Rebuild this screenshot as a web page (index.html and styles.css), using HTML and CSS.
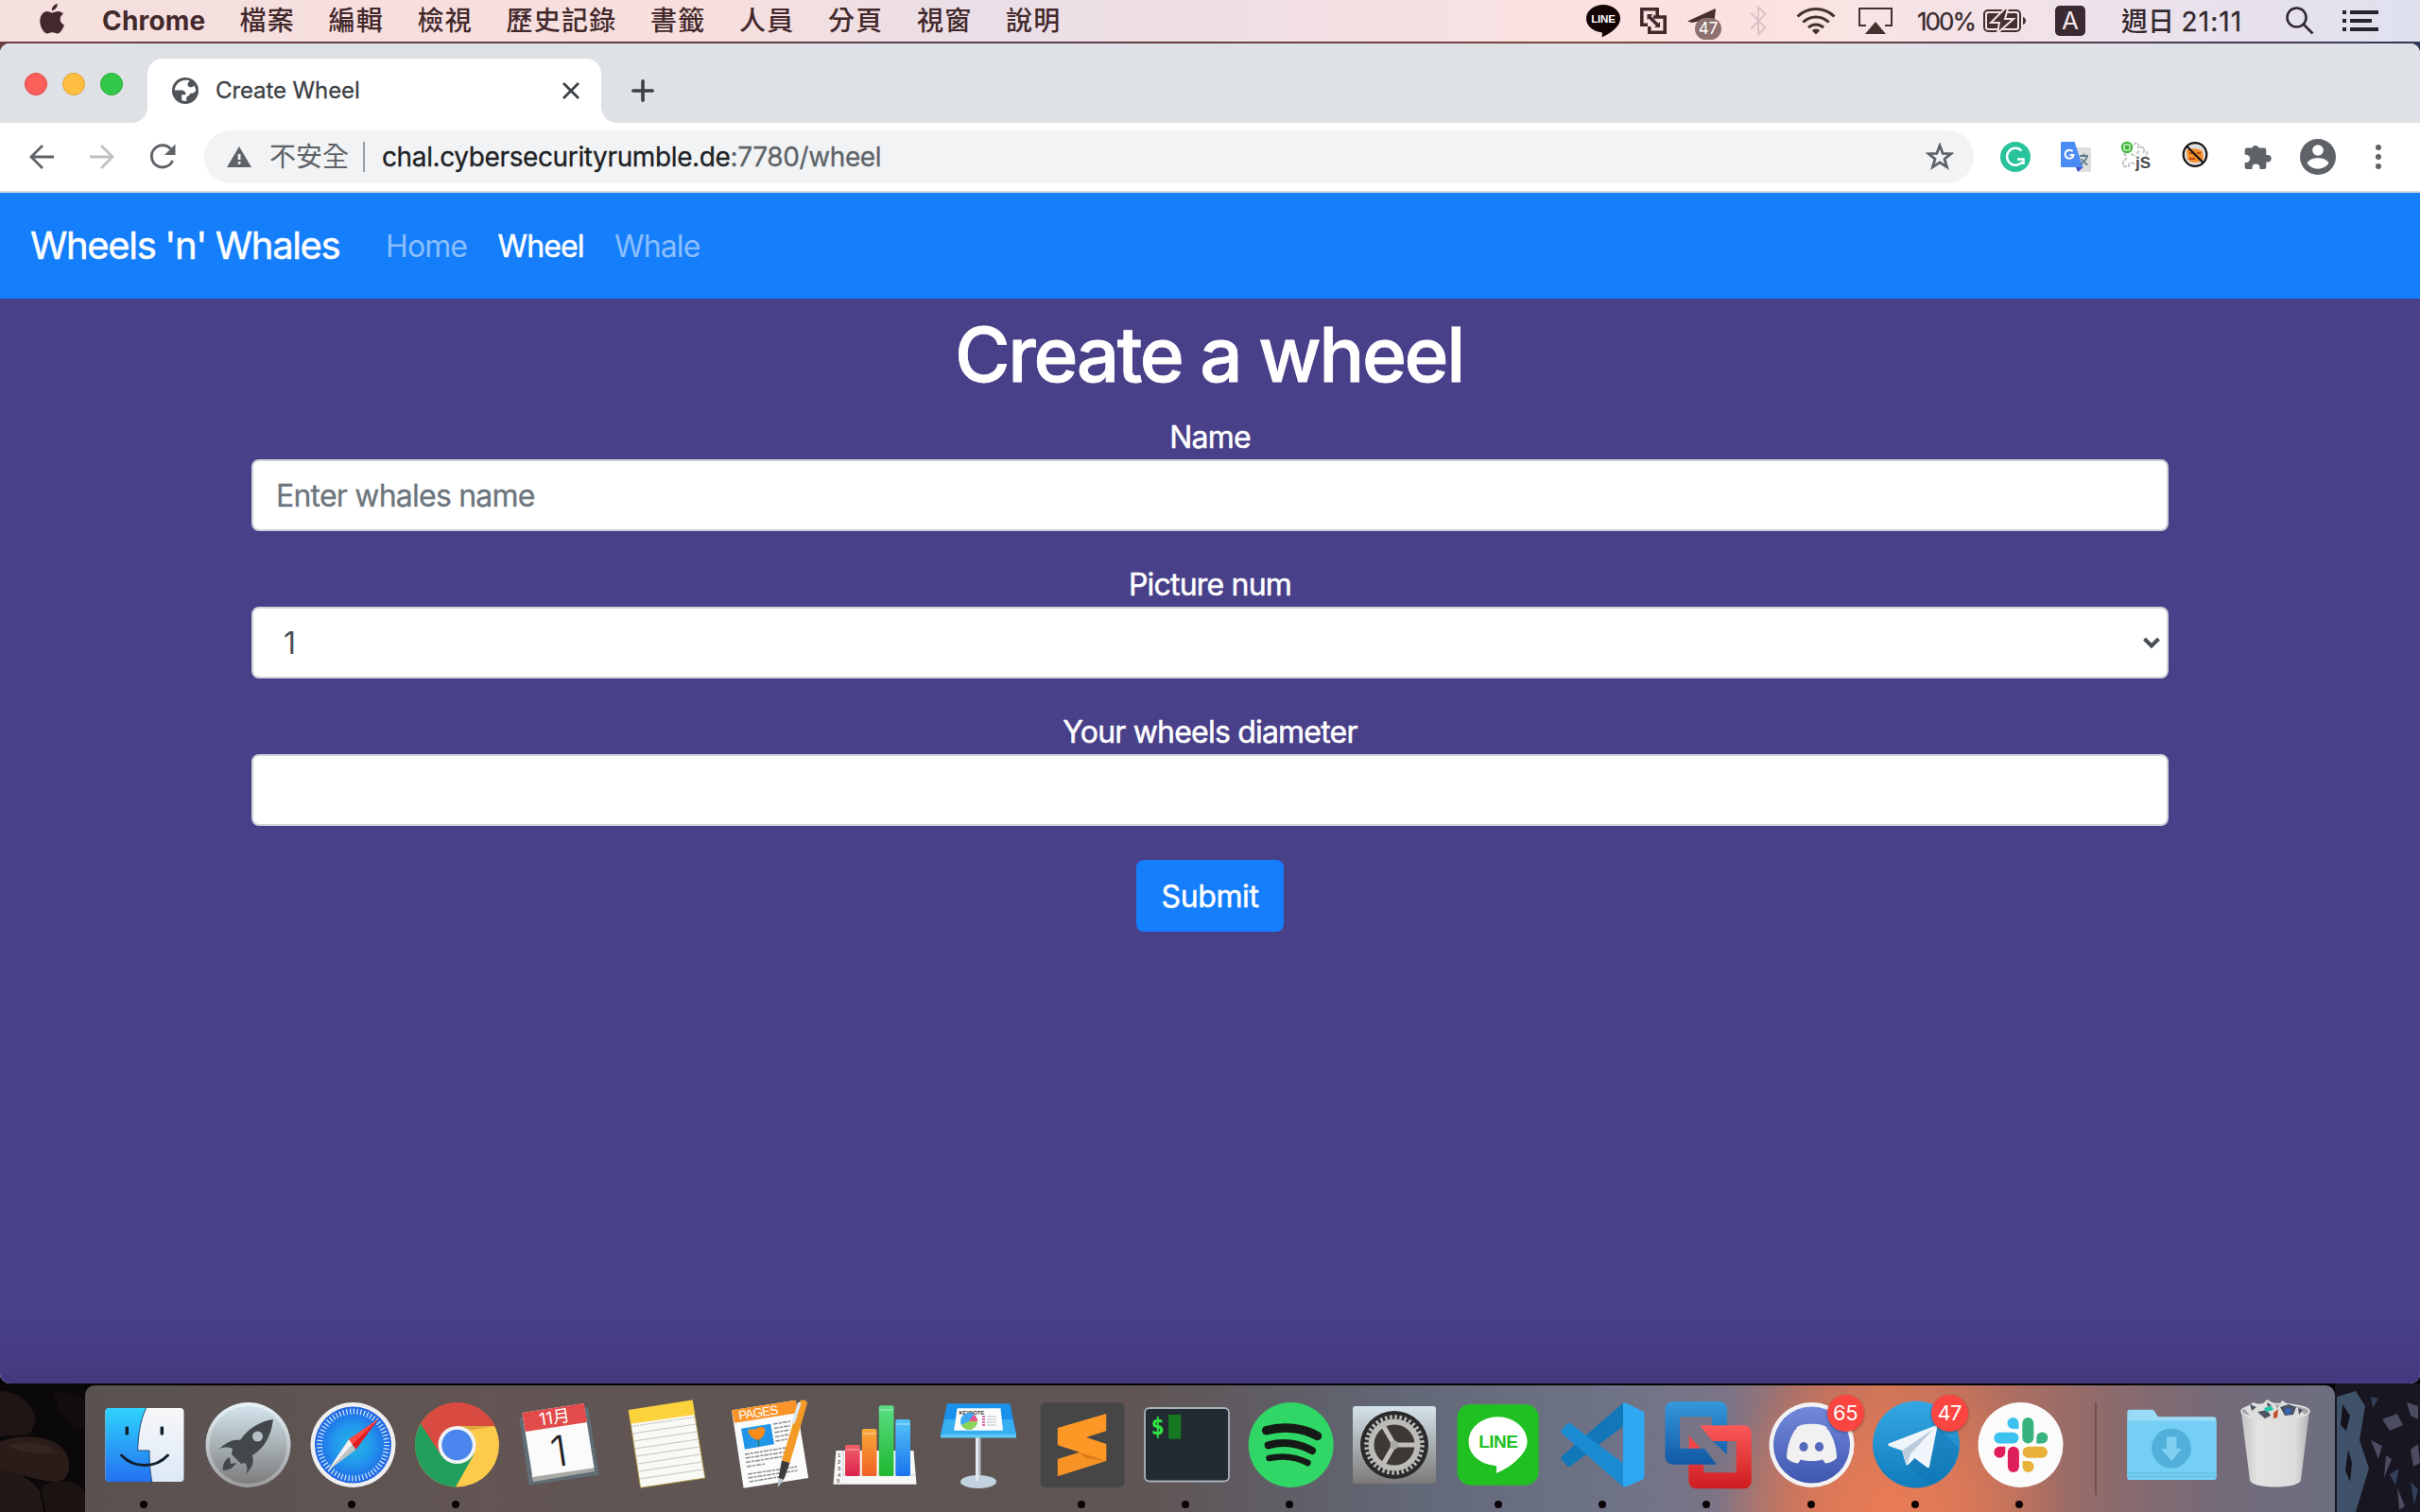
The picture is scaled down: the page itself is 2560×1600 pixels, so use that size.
FILE: index.html
```html
<!DOCTYPE html>
<html lang="zh-Hant">
<head>
<meta charset="utf-8">
<title>Create Wheel</title>
<link rel="stylesheet" href="styles.css">
</head>
<body>
<div class="desktop">
  <header class="menubar">
    <svg class="apple" width="26" height="32" viewBox="0 0 26 32"><path d="M13 9.500c2 0 3.500-1.500 6.500-1.500 2.200 0 4.200 1 5.500 2.800-5 3-4.200 9.500.9 11.600C24.400 26.800 21.700 31.500 18.500 31.500c-2 0-2.800-1.200-5.200-1.200s-3.300 1.200-5.200 1.200C4.300 31.500.3 24.500.3 18.300.3 12 4.100 8.100 8 8.100c2.200 0 3.700 1.400 5 1.400zM12.800 7.200C12.600 3.700 15.500.5 18.800.1c.3 3.600-2.600 7-6 7.100z"/></svg>
    <nav class="menus">
      <span class="app">Chrome</span>
      <span>檔案</span><span>編輯</span><span>檢視</span><span>歷史記錄</span><span>書籤</span><span>人員</span><span>分頁</span><span>視窗</span><span>說明</span>
    </nav>
    <div class="status">
      <svg class="s-line" width="36" height="36" viewBox="0 0 36 36"><path fill="#140406" d="M18 0c10 0 18 6.500 18 14.500C36 24 24 31 16.500 34.500c.5-2.500.5-4 0-5.300C7 28.500 0 22.500 0 14.500 0 6.500 8 0 18 0z"/><text x="18" y="19" class="t-line">LINE</text></svg>
      <svg class="s-vm" width="28" height="28" viewBox="0 0 28 28" fill="none" stroke="#43292b" stroke-width="3.600"><path d="M8 18.200H1.800V1.800h16.400V9M14 10h12.200v16.200H9.800V20M9 9l10 10"/><path d="M7.500 7h6l-6 6zM21 21h-6l6-6z" fill="#43292b" stroke="none"/></svg>
      <div class="s-tg"><svg width="32" height="18" viewBox="0 0 32 18"><path fill="#46302f" d="M0 13.500 28.500.5c1-.4 1.500 0 1.400 1L28 17H12l2-4-9 2z"/></svg><span class="count">47</span></div>
      <svg class="s-bt" width="18" height="32" viewBox="0 0 18 32" fill="none" stroke="#dcc4c6" stroke-width="2"><path d="M1 7.500 16.500 23 9 30.500v-29L16.500 9 1 24.500"/></svg>
      <svg class="s-wifi" width="42" height="30" viewBox="0 0 42 30" fill="none" stroke="#43302f" stroke-width="3"><path d="M1.500 10.500a27.500 27.500 0 0 1 39 0M7.300 16.500a19.500 19.500 0 0 1 27.400 0M13 22.200a11.500 11.500 0 0 1 16 0"/><path d="M21 29.500l-4.200-4.300a6 6 0 0 1 8.400 0z" fill="#43302f" stroke="none"/></svg>
      <svg class="s-air" width="36" height="28" viewBox="0 0 36 28"><path d="M8 19H1V1h34v18h-7" fill="none" stroke="#43302f" stroke-width="2"/><path d="M18 15l11 13H7z" fill="#43302f"/></svg>
      <span class="pct">100%</span>
      <svg class="s-bat" width="46" height="24" viewBox="0 0 46 24"><rect x="1" y="1" width="38" height="22" rx="4" fill="none" stroke="#43302f" stroke-width="2"/><rect x="4" y="4" width="32" height="16" rx="1.500" fill="#43302f"/><path d="M42 8c4 1 4 7 0 8z" fill="#43302f"/><path d="M23-1 8 14h9l-2 11L32 10h-9l3-11z" fill="#43302f" stroke="#f4e2e4" stroke-width="2"/></svg>
      <span class="ime">A</span>
      <span class="clock">週日 <span class="time">21:11</span></span>
      <svg class="s-find" width="30" height="30" viewBox="0 0 30 30" fill="none" stroke="#2e2833" stroke-width="2.600"><circle cx="11.500" cy="11.500" r="10"/><path d="M18.500 18.500 28.500 28.500"/></svg>
      <svg class="s-list" width="38" height="22" viewBox="0 0 38 22" fill="#25232f"><path d="M0 0h4v4H0zM0 9h4v4H0zM0 18h4v4H0zM8 0h30v4H8zM8 9h23v4H8zM8 18h30v4H8z"/></svg>
    </div>
  </header>

  <main class="window">
    <div class="tabstrip">
      <div class="lights"><i class="red"></i><i class="amber"></i><i class="green"></i></div>
      <div class="tab">
        <svg width="28" height="28" viewBox="0 0 28 28"><circle cx="14" cy="14" r="14" fill="#4f5459"/><path d="M16.500 2.800C9 2 3.300 7 2.700 13.600H9c4 0 5.500 1.500 5.500 4.700h-4.300V24c1.500.8 3.500 1.200 5 1.100v-3c0-3.200 4-2.300 4-5.600 3 1 4.500-.5 6-2.500-.2-2-.8-4-1.800-5.400-1.500 2.500-7 2.600-7-1.600 0-2 2-1.800 2-3.500z" fill="#fff"/></svg>
        <span class="title">Create Wheel</span>
        <svg width="18" height="18" viewBox="0 0 18 18" stroke="#3c4043" stroke-width="2.800"><path d="M1 1 17 17M17 1 1 17"/></svg>
      </div>
      <svg class="plus" width="24" height="24" viewBox="0 0 24 24" stroke="#3c4043" stroke-width="3.600" stroke-linecap="round"><path d="M12 1.800v20.400M1.800 12h20.400"/></svg>
    </div>
    <div class="toolbar">
      <svg class="nav-back" width="28" height="28" viewBox="0 0 28 28" fill="none" stroke="#5f6368" stroke-width="2.800"><path d="M27 14H3M15 2 3 14 15 26"/></svg>
      <svg class="nav-fwd" width="28" height="28" viewBox="0 0 28 28" fill="none" stroke="#bfc1c3" stroke-width="2.800"><path d="M1 14h24M13 2 25 14 13 26"/></svg>
      <svg class="nav-reload" width="28" height="28" viewBox="0 0 28 28"><path d="M22.600 5.600A11.600 11.600 0 1 0 24.600 18" fill="none" stroke="#5f6368" stroke-width="2.900"/><path d="M27.500.5v11.500H16z" fill="#5f6368"/></svg>
      <div class="omnibox">
        <svg width="26" height="22" viewBox="0 0 26 22"><path d="M13 0l13 22H0z" fill="#5f6368"/><path d="M11.700 8h2.800v6h-2.800zM11.700 16h2.800v2.800h-2.800z" fill="#f1f3f4"/></svg>
        <span class="insecure">不安全</span>
        <span class="url"><b>chal.cybersecurityrumble.de</b>:7780/wheel</span>
        <svg class="star" width="30" height="30" viewBox="0 0 30 30"><path d="M15 3l3.200 8.400 8.800.3-7 5.500 2.500 8.600L15 20.900l-7.500 4.900L10 17.200l-7-5.500 8.800-.3z" fill="none" stroke="#5f6368" stroke-width="2.800"/></svg>
      </div>
      <div class="exts">
        <svg width="32" height="32" viewBox="0 0 32 32"><circle cx="16" cy="16" r="16" fill="#28c39b"/><path d="M22.500 9.500A9 9 0 1 0 23 21.500M24.500 24v-5.500H18" fill="none" stroke="#fff" stroke-width="2.500"/></svg>
        <svg width="32" height="32" viewBox="0 0 32 32"><path d="M12 6h18.500a1.500 1.500 0 0 1 1.500 1.500V32H19z" fill="#dedede"/><path d="M1.500 0H14.500L23.500 27H1.500A1.500 1.500 0 0 1 0 25.500V1.500A1.500 1.500 0 0 1 1.500 0z" fill="#4b8bf4"/><path d="M16 27h7.500L18 32z" fill="#3a53c5"/><path d="M20 15h9M24.500 12.500V15M28 15c-1 4-4 7-7.500 9M22 18c1 3 4 5 6.500 6.500" fill="none" stroke="#5f7d8c" stroke-width="1.800"/><path d="M12.500 10.300A4.500 4.500 0 1 0 13.500 14H9.500" fill="none" stroke="#fff" stroke-width="2.100"/></svg>
        <svg class="ext-js" width="32" height="32" viewBox="0 0 32 32"><path d="M13 3c3-3 7-1 5 3h6v5c4-2 5 4 1 4M2 13c4 0 5 6 0 7v6h6c-1-5 6-5 5-1M10 13c3 0 3 3 6 2M19 10c-3 1-2 4 0 5" fill="none" stroke="#c4c4c4" stroke-width="2" stroke-dasharray="4 1.500"/><circle cx="6" cy="6" r="6.200" fill="#3fb33a"/><rect x="3" y="3" width="6" height="6" rx="1" fill="none" stroke="#c9f2c5" stroke-width="1.600"/><text x="15" y="27.500" class="t-js">jS</text></svg>
        <svg width="28" height="32" viewBox="0 0 28 32"><circle cx="14" cy="13.500" r="12.300" fill="#dfdfdf"/><path d="M5 9c5-3 13-2 17 1l1 8c-4 5-12 5-17 1z" fill="#f58f2c"/><path d="M8 12h4M16 12h4M8 18h6" stroke="#b84e12" stroke-width="2"/><circle cx="14" cy="13.500" r="12.300" fill="none" stroke="#15110f" stroke-width="2.200"/><path d="M5.500 5 22.500 22" stroke="#15110f" stroke-width="2.200"/></svg>
        <svg width="30" height="30" viewBox="0 0 30 30"><path fill="#5f6368" d="M8.500 5.500V5a4 4 0 0 1 7 0v.5H21a2.300 2.300 0 0 1 2.300 2.300V13H25a3.700 3.700 0 0 1 0 7.400h-1.700v5.300A2.300 2.300 0 0 1 21 28h-4.500v-1.500a4 4 0 0 0-8 0V28H3a2.300 2.300 0 0 1-2.300-2.300V21H2a4 4 0 0 0 0-8.300H.7V7.800A2.300 2.300 0 0 1 3 5.500z"/></svg>
        <svg width="38" height="38" viewBox="0 0 38 38"><circle cx="19" cy="19" r="19" fill="#5f6368"/><circle cx="19" cy="12" r="5.800" fill="#fff"/><path d="M7.500 25.800c3-7.300 20-7.300 23 0-5.500 7.800-17.500 7.800-23 0z" fill="#fff"/></svg>
        <svg width="6" height="26" viewBox="0 0 6 26" fill="#5f6368"><circle cx="3" cy="3" r="3"/><circle cx="3" cy="13" r="3"/><circle cx="3" cy="23" r="3"/></svg>
      </div>
    </div>

    <nav class="navbar">
      <a class="brand">Wheels 'n' Whales</a>
      <a class="link">Home</a><a class="link active">Wheel</a><a class="link">Whale</a>
    </nav>
    <section class="page">
      <form class="form">
        <h1>Create a wheel</h1>
        <label>Name</label>
        <div class="control"><span class="placeholder">Enter whales name</span></div>
        <label>Picture num</label>
        <div class="control select"><span>1</span><svg width="18" height="12" viewBox="0 0 18 12"><path d="M1.500 2 9 9.500 16.500 2" fill="none" stroke="#495057" stroke-width="4"/></svg></div>
        <label>Your wheels diameter</label>
        <div class="control"></div>
        <button class="submit" type="button">Submit</button>
      </form>
    </section>
  </main>

  <footer class="bottom">
    <svg class="rocks" width="90" height="136" viewBox="0 0 90 136"><rect width="90" height="136" fill="#0b0809"/><path d="M0 8c18 0 34 12 38 30l-6 16-32 2z" fill="#1d1413"/><path d="M0 62c20-10 60-8 70 12 8 18 0 32-14 30-20-2-40-10-56-12z" fill="#2a1c19"/><path d="M8 66c20-6 44-4 54 8-10-2-30 4-54-8z" fill="#35241f"/><path d="M0 92c14-2 34 10 42 22l4 22H0z" fill="#241816"/><path d="M44 110c8-8 30-12 46 4v22H48z" fill="#1b1312"/><path d="M56 10c10-6 20 4 34 6v30c-14 4-26-10-34-36z" fill="#120d0e"/></svg>
    <div class="dock">
      <!-- Finder -->
      <div class="cell on"><svg viewBox="0 0 110 134"><defs><linearGradient id="fa" x2="0" y2="1"><stop stop-color="#2fd3fd"/><stop offset="1" stop-color="#2370f0"/></linearGradient><linearGradient id="fb" x2="0" y2="1"><stop stop-color="#f7f7f8"/><stop offset="1" stop-color="#dce9f7"/></linearGradient></defs><rect x="14.500" y="24" width="83" height="78" rx="4" fill="url(#fb)"/><path d="M18.500 24h39C51 38 49 54 48.700 69H61c0 12 1 24 2.800 33H18.500a4 4 0 0 1-4-4V28a4 4 0 0 1 4-4z" fill="url(#fa)"/><path d="M57.500 24C51 38 49 54 48.700 69H61c0 12 1 24 2.800 33" fill="none" stroke="#1a4a80" stroke-width="1"/><path d="M37.300 45v6M74.300 45v6" stroke="#10202e" stroke-width="3.600" stroke-linecap="round"/><path d="M31.500 74c13 14 36 14 49 0" fill="none" stroke="#10202e" stroke-width="3" stroke-linecap="round"/></svg></div>
      <!-- Launchpad -->
      <div class="cell"><svg viewBox="0 0 110 134"><defs><linearGradient id="la" x2="0" y2="1"><stop stop-color="#d3e4ec"/><stop offset="1" stop-color="#7d7d7d"/></linearGradient><linearGradient id="lb" x2="0" y2="1"><stop stop-color="#e9f5fb"/><stop offset="1" stop-color="#9a9a9a"/></linearGradient></defs><circle cx="55.500" cy="63" r="45" fill="url(#lb)"/><circle cx="55.500" cy="63" r="41" fill="url(#la)"/><path d="M82 36C68 38 55 46 47 58c-8-1-14 2-22 9 6-2 10-2 14 0l-1 6 10 10 4-1c3 3 3 7 1 12 7-7 9-12 7-20 13-8 20-21 22-38z" fill="#41474a"/><path d="M36 76c-5 2-8 8-7 14 6 0 11-3 14-8l-6 1z" fill="#41474a"/><circle cx="65.500" cy="54" r="5.500" fill="#b5bfc3"/></svg></div>
      <!-- Safari -->
      <div class="cell on"><svg viewBox="0 0 110 134"><defs><radialGradient id="sa"><stop stop-color="#22b8e0"/><stop offset=".5" stop-color="#2298ee"/><stop offset="1" stop-color="#1f63e4"/></radialGradient></defs><circle cx="55.500" cy="63" r="45" fill="#efefef"/><circle cx="55.500" cy="63" r="40.500" fill="url(#sa)"/><circle cx="55.500" cy="63" r="35.500" fill="none" stroke="#d8ecfb" stroke-width="6" stroke-dasharray="1.200 2.518"/><path d="M82.500 35.500 50.900 57.300 58.400 68z" fill="#e31d24"/><path d="M82.500 35.500 50.900 57.300 54.600 62.600z" fill="#ff4b46"/><path d="M28.500 90.700 50.900 57.300 58.400 68z" fill="#bfc3c6"/><path d="M28.500 90.700 50.900 57.300 54.600 62.600z" fill="#f2f2f2"/></svg></div>
      <!-- Chrome -->
      <div class="cell on"><svg viewBox="0 0 110 134"><circle cx="55.500" cy="63" r="44.500" fill="#fdca4b"/><path d="M55.500 63 73.500 73 54 107.500A44.500 44.500 0 0 1 17 40.700z" fill="#229f5c"/><path d="M17 40.700A44.500 44.500 0 0 1 95.800 43H55.500L38 73z" fill="#d94b40"/><path d="M55.500 43H95l-34 6z" fill="#b8862a" opacity=".45"/><circle cx="55.500" cy="63" r="20" fill="#f3f3f3"/><circle cx="55.500" cy="63" r="16.300" fill="#4a86ee"/></svg></div>
      <!-- Calendar -->
      <div class="cell"><svg viewBox="0 0 110 134"><path d="M11.400 34 84.200 23.300 95.600 94.700 21.500 105.700z" fill="#5f6d75"/><path d="M24 95 90 86l1 5-65 11z" fill="#a9a9a4"/><path d="M14.400 29 79.600 19 90.500 87.300 25.300 97z" fill="#fbfbfb"/><path d="M14.400 29 79.600 19 83 39 17.700 49z" fill="#e24b4a"/><text transform="translate(49.500 40) rotate(-8.500)" class="cal-m">11月</text><text transform="translate(55.500 85.500) rotate(-8.500)" class="cal-d">1</text></svg></div>
      <!-- Notes -->
      <div class="cell"><svg viewBox="0 0 110 134"><path d="M17 26.300 84.400 15.700 97.800 98 29.600 108.300z" fill="#f9f9f6" stroke="#b59a3a" stroke-width=".8"/><path d="M17 26.300 84.400 15.700 87 31 19.500 40.700z" fill="#fcd33c"/><path d="M20 43.500 87 33.500" stroke="#999" stroke-width="1" stroke-dasharray="1.500 1.500"/><path d="M21 51l67-10M22.300 59l67-10M23.600 67l67-10M24.900 75l67-10M26.200 83l67-10M27.500 91l67-10M28.800 99l67-10" stroke="#c4c4c8" stroke-width="1"/></svg></div>
      <!-- Pages -->
      <div class="cell"><svg viewBox="0 0 110 134"><path d="M15 26.300 82.700 15.700 96.200 98 27.600 108.700z" fill="#fbfbfb"/><path d="M15 26.300 82.700 15.700 85.700 29 17.900 39.700z" fill="#fa9429"/><text transform="translate(23 36.500) rotate(-8.500)" class="pages">PAGES</text><path d="M25 45.700 56.200 40.700 60 62.300 28.900 67.700z" fill="#2196e8"/><path d="M32 48c4-4 6 0 9-2 4-3 8-2 9 0 1 6-3 10-7 12-5-1-10-5-11-10z" fill="#f98b1a"/><path d="M43 57l1 8" stroke="#2a6b2a" stroke-width="1"/><path d="M59 41l18-3M60 45.500l17-3M60.500 50l16-3M61 54.500l14-2.500M61.500 59l12-2M29 73l43-7M29.500 77l42-6.500M30 81.500l41-6.500M31 86l20-3M32 94l52-8M32.500 98l52-8M33.500 102l40-6.500" stroke="#8d8d8d" stroke-width="1.500" stroke-dasharray="5 1 3 1"/><path d="M87 17c2-3 8-1 8 2L76.500 82 68 79.500z" fill="#f39a26"/><path d="M87 18 80 40" stroke="#dbe8f5" stroke-width="3.500"/><path d="M68 79.500 76.500 82 70 100 64.500 98z" fill="#3c3c3e"/><path d="M70 100 64.500 98 63.800 108z" fill="#b9c4cc"/></svg></div>
      <!-- Numbers -->
      <div class="cell"><svg viewBox="0 0 110 134"><defs><linearGradient id="n1" x2="0" y2="1"><stop stop-color="#f2606a"/><stop offset="1" stop-color="#d9234a"/></linearGradient><linearGradient id="n2" x2="0" y2="1"><stop stop-color="#f9ab3a"/><stop offset="1" stop-color="#ef5f24"/></linearGradient><linearGradient id="n3" x2="0" y2="1"><stop stop-color="#5ade84"/><stop offset="1" stop-color="#1fb82f"/></linearGradient><linearGradient id="n4" x2="0" y2="1"><stop stop-color="#55c3f8"/><stop offset="1" stop-color="#1a74ee"/></linearGradient></defs><path d="M15.400 69h82.100l3 35.700h-88z" fill="#f7f7f7"/><path d="M23 69v26h76" fill="none" stroke="#c8c8c8" stroke-width="1"/><g class="axis"><text x="17" y="76">1</text><text x="17" y="83">2</text><text x="17" y="90">3</text><text x="17" y="97">4</text><text x="16" y="103">5</text></g><rect x="25" y="63" width="15.700" height="33" rx="2" fill="url(#n1)"/><rect x="42.800" y="46" width="15.700" height="50" rx="2" fill="url(#n2)"/><rect x="60.800" y="21.300" width="15.700" height="74.700" rx="2" fill="url(#n3)"/><rect x="78.300" y="36" width="15.700" height="60" rx="2" fill="url(#n4)"/><path d="M25.500 68h15M43 51h15M61 26h15M78.500 41h15" stroke="#fff" stroke-opacity=".55" stroke-width="1.200"/></svg></div>
      <!-- Keynote -->
      <div class="cell"><svg viewBox="0 0 110 134"><rect x="53" y="55" width="5.500" height="46" fill="#b4bdc6"/><ellipse cx="56" cy="102" rx="19" ry="7" fill="#c3d2e0"/><path d="M53 55h3v46h-3z" fill="#e3e9ee"/><path d="M23 19.300h66.600L96 52H16z" fill="#1b91ee"/><path d="M16 52h80v3.500H16z" fill="#60c8f5"/><path d="M20 36h72l4 16H16z" fill="#39aef0"/><path d="M33.600 24.300h45.900L82 47.700H30.200z" fill="#fcfcfc"/><text x="35.500" y="30.500" class="keynote">KEYNOTE</text><circle cx="46" cy="38" r="9" fill="#3fa9f5"/><path d="M46 38l5-7a9 9 0 0 1 4 7z" fill="#f0508c"/><path d="M46 38h9a9 9 0 0 1-17 4z" fill="#8ed35a"/><path d="M60 33h3M60 36h3M60 39h3M60 42h3" stroke="#d06aa8" stroke-width="1.800"/><path d="M65 33h10M65 36h10M65 39h10M65 42h10" stroke="#cfd3d8" stroke-width="1.300"/></svg></div>
      <!-- Sublime Text -->
      <div class="cell on"><svg viewBox="0 0 110 134"><rect x="11.700" y="18.300" width="89" height="89.400" rx="5" fill="#464646"/><path d="M29.800 78 81.200 62V80L29.800 96.300z" fill="#f79324"/><path d="M29.800 45 81.200 30V48.300L60.200 55 81.200 62V80L29.800 63.300z" fill="#fd9827"/><path d="M51.700 70.500 81.200 80l-21-3z" fill="#d77a16"/></svg></div>
      <!-- Terminal -->
      <div class="cell on"><svg viewBox="0 0 110 134"><rect x="11" y="24" width="89" height="77.500" rx="5" fill="#222b31" stroke="#a9b3b9" stroke-width="1.800"/><rect x="36.200" y="31" width="13" height="25.700" fill="#177a22"/><text x="17.500" y="52" class="prompt">$</text></svg></div>
      <!-- Spotify -->
      <div class="cell on"><svg viewBox="0 0 110 134"><circle cx="55.700" cy="63" r="45" fill="#30d666"/><g fill="none" stroke="#161a16" stroke-linecap="round"><path d="M29.600 47.700C48 42.500 69 45 83.500 53.500" stroke-width="9.500"/><path d="M31.700 63.300C47 59 64 61 78 69" stroke-width="8"/><path d="M32.500 77C46 74 61 75.500 73.400 82" stroke-width="6.500"/></g></svg></div>
      <!-- System preferences -->
      <div class="cell"><svg viewBox="0 0 110 134"><defs><linearGradient id="pa" x2="0" y2="1"><stop stop-color="#d5e3ea"/><stop offset="1" stop-color="#7c7a79"/></linearGradient></defs><rect x="11" y="22" width="88" height="82" rx="3" fill="url(#pa)"/><circle cx="55" cy="63" r="36" fill="#2a2a2b"/><circle cx="55" cy="63" r="29.500" fill="none" stroke="#bdbbb8" stroke-width="4.500" stroke-dasharray="2.600 2.550"/><circle cx="55" cy="63" r="24.500" fill="#3b3836" stroke="#bdbbb8" stroke-width="6"/><path d="M55 63h22M55 63 44 44M55 63 44 82" stroke="#c2c0bd" stroke-width="5"/><circle cx="55" cy="63" r="4.500" fill="#a9a7a5"/></svg></div>
      <!-- LINE -->
      <div class="cell on"><svg viewBox="0 0 110 134"><rect x="11.600" y="20" width="86" height="85.700" rx="14" fill="#20c022"/><path d="M54.600 33.300C71 33.300 85.600 45 85.600 59.500 85.600 74 64 89 52.500 93c1-3.500 1-6 0-8C35 83.500 23.600 73 23.600 59.500c0-14.500 14-26.200 31-26.200z" fill="#fff"/><text x="54.800" y="66" class="line-app">LINE</text></svg></div>
      <!-- VS Code -->
      <div class="cell on"><svg viewBox="0 0 110 134"><path d="M76 18.700V43.300L20.500 85.500q-2 1.500-4-.8L11 78.500q-1.500-2 .5-4z" fill="#1177b8"/><path d="M76 107.300V82.300L20.500 40.500q-2-1.500-4 .5l-5.500 6q-1.500 2 .5 4z" fill="#1a8ad2"/><path d="M76 18.700q3-.5 5 .8l16 8q1.500 1 1.500 3v66q0 2-1.500 3l-16 7q-2 1-5 .800z" fill="#2fa8f2"/></svg></div>
      <!-- VMware -->
      <div class="cell on"><svg viewBox="0 0 110 134"><defs><linearGradient id="va" gradientUnits="userSpaceOnUse" x1="0" x2="0" y1="17" y2="84"><stop stop-color="#3498dc"/><stop offset="1" stop-color="#1258a4"/></linearGradient><linearGradient id="vb" gradientUnits="userSpaceOnUse" x1="0" x2="0" y1="42" y2="109"><stop stop-color="#fb5a5a"/><stop offset="1" stop-color="#cf1c20"/></linearGradient></defs><path d="M43.300 109.300a8 8 0 0 1-8-8V83h16v9.300h34.500V59H60.600L47 42.300h46.800a8 8 0 0 1 8 8v51a8 8 0 0 1-8 8z" fill="url(#vb)"/><path d="M18.500 17H68a8 8 0 0 1 8 8v17.300H60V33.300H26v33.400h26L65 83.700H18.500a8 8 0 0 1-8-8V25a8 8 0 0 1 8-8zM60.600 59H76v14z" fill="url(#va)"/><path d="M35.700 53 48 66.700H35.700z" fill="#f0454a"/></svg></div>
      <!-- Discord -->
      <div class="cell on"><svg viewBox="0 0 110 134"><defs><linearGradient id="da" x2="0" y2="1"><stop stop-color="#7289da"/><stop offset="1" stop-color="#3f57b0"/></linearGradient></defs><circle cx="55.500" cy="63" r="45" fill="#f2f2f4"/><circle cx="55.500" cy="63" r="40.500" fill="url(#da)"/><path d="M38 47c6-4 12-5 17.500-5S67 43 73 47c6 9 9 20 9 30-4 4-8 5-12 5.500l-3-4c-7 2-16 2-23 0l-3 4c-4-.5-8-1.500-12-5.500 0-10 3-21 9-30z" fill="#f1f1f2"/><path d="M40 46c5-5 26-5 31 0" fill="none" stroke="#f1f1f2" stroke-width="3"/><ellipse cx="47" cy="65" rx="4.600" ry="5" fill="#5369bd"/><ellipse cx="63.500" cy="65" rx="4.600" ry="5" fill="#5369bd"/></svg><span class="badge">65</span></div>
      <!-- Telegram -->
      <div class="cell on"><svg viewBox="0 0 110 134"><defs><linearGradient id="ta" x2="0" y2="1"><stop stop-color="#35a7e4"/><stop offset="1" stop-color="#0f7cbb"/></linearGradient></defs><circle cx="56" cy="62.500" r="46" fill="url(#ta)"/><path d="M45 84 78.200 42.700 101 66c-2 18-15 34-31 38z" fill="#0d6ea8" opacity=".35"/><path d="M27 61.500 76 42.700q2.500-.8 2.200 2L70 86q-.8 2-2.600.7L54.500 77 47 84.500q-1.500.5-2-1.500L41 69l-14-5q-1.500-1 0-2.500z" fill="#eff5fa"/><path d="M41 69 74 46.500 50 72.500 46 84z" fill="#b9cbdc"/></svg><span class="badge">47</span></div>
      <!-- Slack -->
      <div class="cell on"><svg viewBox="0 0 110 134"><circle cx="55.500" cy="63" r="45" fill="#fbfbfb"/><g fill="#3cc2ee"><rect x="27.300" y="49.700" width="26.200" height="11.800" rx="5.900"/><path d="M53.500 46V40a6 6 0 1 0-6 6z"/></g><g fill="#37b37e"><rect x="57.300" y="34" width="12" height="27.400" rx="6"/><path d="M72.300 61.500h6a6 6 0 1 0-6-6z"/></g><g fill="#df1f5c"><rect x="41.900" y="64.700" width="12" height="27.400" rx="6"/><path d="M39.300 64.700h-6a6 6 0 1 0 6 6z"/></g><g fill="#eab13a"><rect x="57.600" y="64.700" width="26.400" height="12" rx="6"/><path d="M57.600 80v6a6 6 0 1 0 6-6z"/></g></svg></div>
      <div class="rule"></div>
      <!-- Downloads -->
      <div class="cell"><svg viewBox="0 0 110 134"><path d="M11 25.700h23q2.500 0 3.500 2l2.500 4.500q.8 1 3 1h56q3.500 0 3.500 3V97q0 3-3 3H11.300q-3 0-3-3V28.700q0-3 2.700-3z" fill="#9adcf7"/><path d="M8.300 37.500h94.200V97q0 3-3 3H11.300q-3 0-3-3z" fill="#75cff5"/><path d="M8.300 93h94.200M8.300 96.500h94.200" stroke="#5fb8de" stroke-width="1"/><circle cx="55" cy="66.500" r="21" fill="#51b0da"/><path d="M50 54.500h10.500V67H66L55.200 80 44 67h6z" fill="#7fd0f2"/></svg></div>
      <!-- Trash -->
      <div class="cell"><svg viewBox="0 0 110 134"><defs><linearGradient id="tr"><stop stop-color="#c4c4c5"/><stop offset=".25" stop-color="#e4e4e4"/><stop offset=".8" stop-color="#dcdcdc"/><stop offset="1" stop-color="#b3b3b5"/></linearGradient></defs><path d="M18.700 27 28 100c1 10 53 10 54 0L91 27z" fill="url(#tr)"/><ellipse cx="55" cy="27.500" rx="36" ry="8" fill="#a5a5aa" stroke="#e8e8ea" stroke-width="1.500"/><path d="M22 24l10-6 8 3 6-6 8 4 3 6 5-9 10 6 8 2 6 7-8 5-14 3-20-1-14-3z" fill="#dedede"/><path d="M28 20l7 3-5 4zM36 28l8 7 6-3-4-6zM60 23l5 9 9-1 3-8-8-3zM79 24l5 2-4 5zM46 18l5 3-4 2z" fill="#4b5260"/><path d="M43 24l8-2 2 4-8 2z" fill="#21c5a8"/><path d="M66 24l6 1-2 6-5-2z" fill="#3565c0"/><path d="M53 29l5-4-1 9-4 1z" fill="#c4512e"/></svg></div>
    </div>
    <svg class="rocks" width="90" height="136" viewBox="0 0 90 136"><rect width="90" height="136" fill="#181620"/><path d="M2 14 22 8 32 24 26 60 36 90 22 136H2z" fill="#40526a"/><path d="M8 22 16 34 12 50 6 44zM14 70l4 14-2 20-5-12z" fill="#14121c"/><path d="M50 38l16-6 6 12-14 6zM76 20l12 4v14l-8-4zM80 70l8-6 2 20-7 4zM38 60l12 6-4 14zM66 110l8 20-6 4zM54 76l6 4-8 20z" fill="#4c4c60"/><path d="M38 14l8 2-6 10zM58 96l10-6-4 18zM80 104l8 8-4 16z" fill="#33405a"/></svg>
  </footer>
</div>
</body>
</html>
```
FILE: styles.css
```css
* { box-sizing: border-box; }
body { margin: 0; width: 2560px; height: 1600px; overflow: hidden; font-family: Inter, "Noto Sans CJK TC", sans-serif; }
svg { display: block; flex: none; }
.desktop { display: flex; flex-direction: column; height: 1600px; background: linear-gradient(90deg, #6e3f40, #583c48 40%, #7d4540 65%, #34365a) 0 0 / 100% 70px no-repeat #000; }

.menubar { display: flex; align-items: center; height: 44px; flex: none; padding-left: 42px; background: linear-gradient(90deg, #f5dfdf 0, #f7dfde 30%, #eadfe7 40%, #f0dfe4 52%, #fbe1e0 66%, #fae3e3 76%, #efe2ea 86%, #dfe1ef 100%); color: #43292b; font-size: 28px; }
.apple { fill: #43292b; margin-top: -4px; }
.menus { display: flex; margin-left: 40px; gap: 35.400px; line-height: 44px; font-weight: 500; letter-spacing: 1.300px; }
.menus .app { width: 110px; font-weight: 700; letter-spacing: .2px; }
.status { display: flex; align-items: center; margin-left: auto; height: 44px; color: #3a2a30; }
.t-line { font: 700 11.500px "Liberation Sans", sans-serif; fill: #fff; text-anchor: middle; letter-spacing: -.2px; }
.s-line { margin-top: 1px; }
.s-vm { margin-left: 21px; }
.s-tg { position: relative; width: 36px; height: 44px; margin-left: 22px; padding-top: 9px; }
.count { position: absolute; left: 8px; top: 19px; width: 28px; height: 23px; border-radius: 12px; background: #8c7170; color: #fff; font-size: 17px; line-height: 23px; text-align: center; }
.s-bt { margin-left: 30px; }
.s-wifi { margin-left: 31px; }
.s-air { margin-left: 24px; }
.pct { margin-left: 26px; width: 61px; font-size: 26px; letter-spacing: -2px; -webkit-text-stroke: .3px; }
.s-bat { margin-left: 9px; }
.ime { width: 32px; height: 32px; margin-left: 30px; border-radius: 5px; background: #3a2a31; color: #f3e4ea; line-height: 32px; text-align: center; font-size: 26px; }
.clock { width: 127px; margin-left: 38px; margin-top: -2px; white-space: nowrap; font-size: 28px; font-weight: 500; color: #33272e; }
.time { font-weight: 400; letter-spacing: 1.100px; -webkit-text-stroke: .3px; }
.s-find { margin-left: 47px; }
.s-list { margin: 0 44px 0 30px; }

.window { display: flex; flex-direction: column; height: 1418px; margin-top: 2px; flex: none; border-radius: 10px; overflow: hidden; background: #fff; }
.tabstrip { display: flex; height: 84px; flex: none; background: #dee1e6; }
.lights { display: flex; gap: 16px; width: 156px; padding: 31px 0 0 26px; background: #dee1e6; }
.lights i { width: 24px; height: 24px; border-radius: 50%; border-width: 1px; border-style: solid; }
.red { background: #fc605b; border-color: #e14640; }
.amber { background: #fdbe41; border-color: #e0a02f; }
.green { background: #34c84a; border-color: #24ab34; }
.tab { position: relative; display: flex; align-items: center; width: 480px; height: 68px; margin-top: 16px; padding: 0 23px 0 26px; border-radius: 16px 16px 0 0; background: #fff; }
.tab::before, .tab::after { content: ""; position: absolute; bottom: 0; width: 16px; height: 16px; }
.tab::before { left: -16px; background: radial-gradient(circle at 0 0, #dee1e6 15.500px, #fff 16px); }
.tab::after { right: -16px; background: radial-gradient(circle at 100% 0, #dee1e6 15.500px, #fff 16px); }
.title { flex: 1; margin-left: 18px; margin-top: -1px; font-size: 24px; letter-spacing: -.1px; color: #3c4043; -webkit-text-stroke: .3px; }
.plus { margin: 38px 0 0 32px; }
.toolbar { display: flex; align-items: center; height: 74px; flex: none; padding-left: 30px; border-bottom: 2px solid #d9dbdf; background: #fff; }
.nav-fwd { margin-left: 36px; }
.nav-reload { margin-left: 36px; }
.omnibox { display: flex; align-items: center; width: 1872px; height: 56px; margin-left: 30px; padding: 0 21px 0 24px; border-radius: 28px; background: #f1f3f4; font-size: 28px; color: #5f6368; }
.insecure { margin-left: 19px; width: 101px; height: 32px; line-height: 32px; border-right: 2px solid #9aa0a6; white-space: nowrap; }
.url { margin-left: 18px; flex: 1; letter-spacing: -.38px; -webkit-text-stroke: .3px; }
.url b { font-weight: 400; color: #202124; }
.exts { display: flex; align-items: center; margin-left: 28px; }
.exts svg { margin-right: 32px; }
.exts svg:nth-child(4) { margin-right: 38px; }
.exts svg:nth-child(5) { margin-right: 29px; }
.exts svg:nth-child(6) { margin-right: 42px; }
.exts svg:nth-child(7) { margin-right: 0; }
.ext-js { overflow: visible; }
.t-js { font: 700 17px "Liberation Sans", sans-serif; fill: #4a4a4a; }

.navbar { display: flex; align-items: center; height: 112px; flex: none; padding-left: 32px; background: #157efb; color: #fff; font-size: 32px; -webkit-text-stroke: .5px; }
.brand { font-size: 40px; width: 328px; margin: -1px 48px 0 0; white-space: nowrap; letter-spacing: -1.350px; }
.link { color: rgba(255,255,255,.5); margin-right: 32.500px; letter-spacing: -.9px; -webkit-text-stroke: 0; }
.link.active { color: #fff; -webkit-text-stroke: .5px; }
.page { flex: 1; padding: 11px 266px 0; background: linear-gradient(#484088 0, #484088 94%, #44397f 100%); color: #fff; font-size: 32px; }
.form { display: flex; flex-direction: column; align-items: center; }
h1 { margin: 0 0 16px; font-size: 80px; line-height: 96px; font-weight: 500; white-space: nowrap; letter-spacing: -2.400px; text-indent: -2px; -webkit-text-stroke: .8px; }
label { height: 47px; line-height: 48px; white-space: nowrap; letter-spacing: -.8px; -webkit-text-stroke: .5px; }
.control { display: flex; align-items: center; width: 2028px; height: 76px; margin-bottom: 33px; padding: 0 24px; border: 2px solid #ced4da; border-radius: 8px; background: #fff; color: #495057; }
.placeholder { color: #6c757d; letter-spacing: -.78px; -webkit-text-stroke: .3px; }
.select { justify-content: space-between; padding: 0 7px 0 32px; }
.submit { width: 156px; height: 76px; margin-top: 3px; padding: 0; border: 0; border-radius: 8px; background: #157efb; color: #fff; font: 400 32px Inter, sans-serif; letter-spacing: -.4px; -webkit-text-stroke: .5px; }

.bottom { display: flex; justify-content: space-between; height: 136px; flex: none; background: #050405; }
.dock { display: flex; width: 2380px; height: 134px; margin-top: 2px; padding-left: 7px; border-radius: 10px 10px 0 0; background: radial-gradient(ellipse 190px 170px at 1910px 134px, #ea7c55 0, rgba(226,122,86,.8) 40%, rgba(200,112,90,0) 100%), linear-gradient(90deg, #595251 0, #625553 18%, #5d5553 35%, #605554 47%, #5f5f68 54%, #646a7a 60%, #6f7387 68%, #7b7486 73%, #b57062 77%, #c87459 80%, #b8705e 84%, #8c6a6c 90%, #736b79 95%, #6d6f80 100%); }
.cell { position: relative; width: 110.250px; height: 134px; flex: none; }
.cell svg { width: 110px; height: 134px; }
.cell.on::after { content: ""; position: absolute; left: 50.500px; top: 122px; width: 8px; height: 8px; border-radius: 50%; background: #0a0204; }
.badge { position: absolute; left: 71.500px; top: 10px; width: 39px; height: 39px; border-radius: 50%; background: #fb4540; color: #fff; font-size: 22px; line-height: 39px; text-align: center; letter-spacing: -.5px; box-shadow: 0 1px 3px rgba(0,0,0,.35); }
.rule { width: 2px; height: 98px; margin: 18px 24.250px 0 24px; background: #7a4d48; }
.cal-m { font: 400 18px Inter, "Noto Sans CJK TC", sans-serif; fill: #fff; text-anchor: middle; }
.cal-d { font: 300 45px Inter, sans-serif; fill: #222; text-anchor: middle; }
.pages { font: 400 13.500px "Liberation Sans", sans-serif; fill: #fff; letter-spacing: -.8px; }
.axis { font: 700 6px "Liberation Sans", sans-serif; fill: #666; }
.keynote { font: 700 5.500px "Liberation Sans", sans-serif; fill: #333; }
.prompt { font: 700 24px "DejaVu Sans Mono", monospace; fill: #2fe544; }
.line-app { font: 700 19px "Liberation Sans", sans-serif; fill: #20c022; text-anchor: middle; letter-spacing: -.5px; }
```
